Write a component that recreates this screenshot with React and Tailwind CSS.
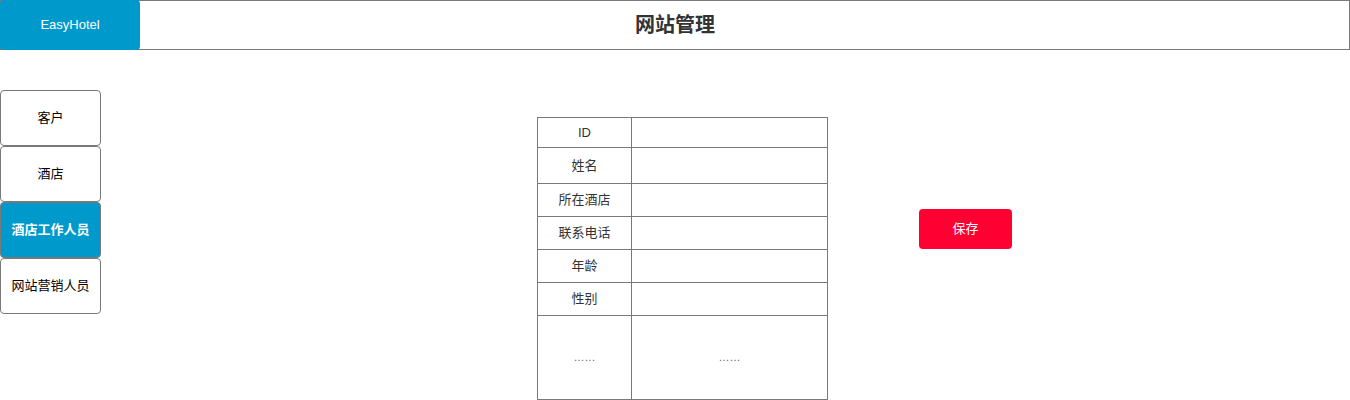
export default function App() {
  const rows = [
    ["ID", 30],
    ["姓名", 36],
    ["所在酒店", 33],
    ["联系电话", 33],
    ["年龄", 33],
    ["性别", 33],
  ];
  const nav = ["客户", "酒店", "酒店工作人员", "网站营销人员"];
  const font = { fontFamily: '"Liberation Sans", "Noto Sans CJK SC", Arial, sans-serif' };
  return (
    <div className="w-[1350px] h-[400px] bg-white overflow-hidden text-[13px]" style={font}>
      <div className="grid grid-cols-[140px_1fr_140px] h-[50px] border border-[#797979]">
        <div className="-m-px h-[50px] w-[140px] bg-[#0099cc] rounded-[4px] flex items-center justify-center text-white text-[13px]">
          EasyHotel
        </div>
        <div className="flex items-center justify-center text-[20px] font-bold text-[#333333]">网站管理</div>
        <div></div>
      </div>
      <div className="flex mt-[40px]">
        <div className="w-[101px] flex flex-col">
          {nav.map((n, i) => (
            <div
              key={n}
              className={
                i === 2
                  ? "h-[56px] border border-[#797979] rounded-[4px] bg-[#0099cc] text-white font-bold flex items-center justify-center"
                  : "h-[56px] border border-[#797979] rounded-[4px] bg-white text-black flex items-center justify-center"
              }
            >
              {n}
            </div>
          ))}
        </div>
        <div className="ml-[436px] mt-[27px] w-[291px] border-l border-t border-[#797979] text-[#333333]">
          {rows.map(([label, h]) => (
            <div key={label} className="flex" style={{ height: h }}>
              <div className="w-[94px] border-r border-b border-[#797979] flex items-center justify-center">{label}</div>
              <div className="w-[196px] border-r border-b border-[#797979]"></div>
            </div>
          ))}
          <div className="flex h-[84px]">
            <div className="w-[94px] border-r border-b border-[#797979] flex items-center justify-center text-[#666666] text-[11px]">……</div>
            <div className="w-[196px] border-r border-b border-[#797979] flex items-center justify-center text-[#666666] text-[11px]">……</div>
          </div>
        </div>
        <div className="ml-[91px] mt-[119px]">
          <div className="w-[93px] h-[40px] bg-[#ff0033] rounded-[4px] text-white flex items-center justify-center">保存</div>
        </div>
      </div>
    </div>
  );
}
